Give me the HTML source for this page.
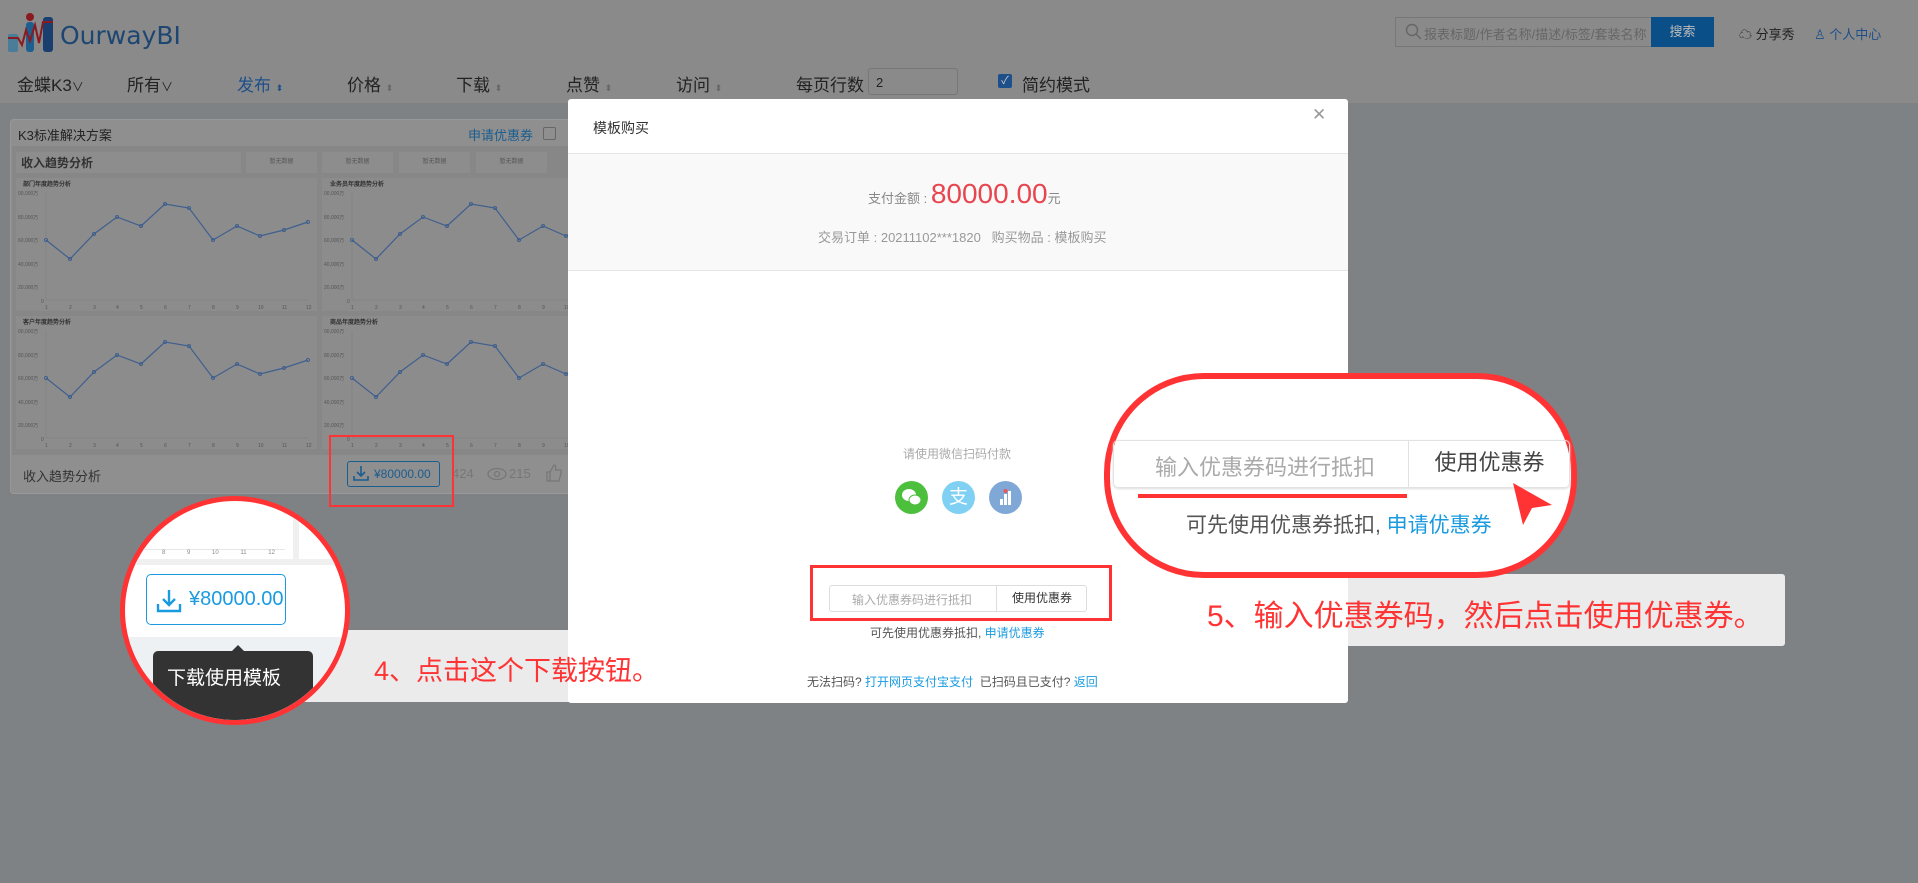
<!DOCTYPE html>
<html><head><meta charset="utf-8">
<style>
*{margin:0;padding:0;box-sizing:border-box}
body{width:1918px;height:883px;overflow:hidden;position:relative;background:#7f8285;font-family:"Liberation Sans","Noto Sans CJK SC",sans-serif}
.a{position:absolute;white-space:nowrap}
.nav{font-size:17px;color:#222;top:71px}
</style></head><body>
<div class="a" style="left:0;top:0;width:1918px;height:103px;background:#8a8a8a"></div>
<svg class="a" style="left:0;top:0" width="60" height="56">
<rect x="8" y="34" width="10" height="18" rx="2" fill="#4a7d98"/>
<rect x="26" y="22" width="8" height="30" rx="3" fill="#1d5f8f"/>
<rect x="43" y="17" width="10" height="35" rx="3" fill="#1a3f6e"/>
<circle cx="30" cy="17" r="4" fill="#8a1a22"/>
<polyline points="8,38 18,38 22,45 26,30 30,41 35,25 39,43 43,22 53,22" fill="none" stroke="#8a1a22" stroke-width="2"/>
</svg>
<div class="a" style="left:60px;top:21px;font-size:25px;color:#1d4672;font-family:'DejaVu Sans',sans-serif">OurwayBI</div>
<div class="a nav" style="left:17px">金蝶K3<span style="font-size:12px">∨</span></div>
<div class="a nav" style="left:127px">所有<span style="font-size:12px">∨</span></div>
<div class="a nav" style="left:237px;color:#1d4f8a">发布 <span style="font-size:9px">⬍</span></div>
<div class="a nav" style="left:347px">价格 <span style="font-size:9px;color:#666">⬍</span></div>
<div class="a nav" style="left:456px">下载 <span style="font-size:9px;color:#666">⬍</span></div>
<div class="a nav" style="left:566px">点赞 <span style="font-size:9px;color:#666">⬍</span></div>
<div class="a nav" style="left:676px">访问 <span style="font-size:9px;color:#666">⬍</span></div>
<div class="a nav" style="left:796px">每页行数</div>
<div class="a" style="left:868px;top:68px;width:90px;height:27px;border:1px solid #777;border-radius:3px;font-size:13px;padding:6px 7px;color:#222">2</div>
<div class="a" style="left:998px;top:74px;width:14px;height:14px;background:#1d4f8a;border-radius:2px;color:#ccc;font-size:11px;text-align:center;line-height:14px">✓</div>
<div class="a nav" style="left:1022px">简约模式</div>
<div class="a" style="left:1395px;top:17px;width:257px;height:30px;border:1px solid #777;font-size:13px;color:#666;padding:6px 0 0 28px">报表标题/作者名称/描述/标签/套装名称</div>
<svg class="a" style="left:1405px;top:23px" width="18" height="18"><circle cx="7" cy="7" r="5.5" fill="none" stroke="#666" stroke-width="1.4"/><line x1="11" y1="11" x2="16" y2="16" stroke="#666" stroke-width="1.4"/></svg>
<div class="a" style="left:1651px;top:17px;width:63px;height:30px;background:#0b4f88;color:#bbb;font-size:13px;text-align:center;line-height:30px">搜索</div>
<div class="a" style="left:1739px;top:24px;font-size:13px;color:#222">☁ 分享秀</div>
<div class="a" style="left:1814px;top:24px;font-size:13px;color:#1d4f8a">♙ 个人中心</div>

<div class="a" style="left:10px;top:119px;width:600px;height:375px;background:#8f8f8f;border:1px solid #999;border-radius:4px"></div>
<div class="a" style="left:18px;top:125px;font-size:13px;color:#222">K3标准解决方案</div>
<div class="a" style="left:468px;top:125px;font-size:13px;color:#1a5d8f">申请优惠券</div>
<div class="a" style="left:543px;top:127px;width:13px;height:13px;border:1px solid #666;border-radius:2px"></div>
<div class="a" style="left:12px;top:146px;width:560px;height:309px;background:#878787"></div>
<div class="a" style="left:16px;top:152px;width:225px;height:21px;background:#8d8d8d;font-size:12px;font-weight:bold;color:#333;padding:2px 5px">收入趋势分析</div>
<div class="a" style="left:246px;top:152px;width:71px;height:21px;background:#8d8d8d;font-size:6px;color:#555;text-align:center;line-height:21px">暂无数据</div>
<div class="a" style="left:322px;top:152px;width:71px;height:21px;background:#8d8d8d;font-size:6px;color:#555;text-align:center;line-height:21px">暂无数据</div>
<div class="a" style="left:399px;top:152px;width:71px;height:21px;background:#8d8d8d;font-size:6px;color:#555;text-align:center;line-height:21px">暂无数据</div>
<div class="a" style="left:476px;top:152px;width:71px;height:21px;background:#8d8d8d;font-size:6px;color:#555;text-align:center;line-height:21px">暂无数据</div>
<svg class="a" style="left:0;top:0" width="580" height="460" font-family="Liberation Sans" font-size="5" fill="#555">
<defs><g id="ch">
<rect width="301" height="133" fill="#8c8c8c"/>
<g fill="#555"><text x="2" y="17">00,000万</text><text x="2" y="41">80,000万</text><text x="2" y="64">60,000万</text><text x="2" y="88">40,000万</text><text x="2" y="111">20,000万</text><text x="25" y="125">0</text></g>
<line x1="30" y1="15" x2="30" y2="122" stroke="#7e7e7e" stroke-width=".6"/>
<line x1="30" y1="122" x2="292" y2="122" stroke="#7e7e7e" stroke-width=".6"/>
<polyline fill="none" stroke="#3f5f8f" stroke-width="1.2" points="30,62 54,81 78,56 101,39 125,48 149,26 173,30 197,62 221,48 244,58 268,52 292,44"/>
<g fill="none" stroke="#3f5f8f" stroke-width=".9"><circle cx="30" cy="62" r="1.6"/><circle cx="54" cy="81" r="1.6"/><circle cx="78" cy="56" r="1.6"/><circle cx="101" cy="39" r="1.6"/><circle cx="125" cy="48" r="1.6"/><circle cx="149" cy="26" r="1.6"/><circle cx="173" cy="30" r="1.6"/><circle cx="197" cy="62" r="1.6"/><circle cx="221" cy="48" r="1.6"/><circle cx="244" cy="58" r="1.6"/><circle cx="268" cy="52" r="1.6"/><circle cx="292" cy="44" r="1.6"/></g>
<g><text x="29" y="131">1</text><text x="53" y="131">2</text><text x="77" y="131">3</text><text x="100" y="131">4</text><text x="124" y="131">5</text><text x="148" y="131">6</text><text x="172" y="131">7</text><text x="196" y="131">8</text><text x="220" y="131">9</text><text x="242" y="131">10</text><text x="266" y="131">11</text><text x="290" y="131">12</text></g>
</g></defs>
<use href="#ch" x="16" y="178"/><use href="#ch" x="322" y="178"/><use href="#ch" x="16" y="316"/><use href="#ch" x="322" y="316"/>
<g font-size="6" font-weight="bold" fill="#333"><text x="23" y="186">部门年度趋势分析</text><text x="330" y="186">业务员年度趋势分析</text><text x="23" y="324">客户年度趋势分析</text><text x="330" y="324">商品年度趋势分析</text></g>
</svg>
<div class="a" style="left:23px;top:466px;font-size:13px;color:#333">收入趋势分析</div>
<div class="a" style="left:347px;top:461px;width:93px;height:26px;border:1px solid #1a5d8f;border-radius:3px;font-size:12px;color:#1a5d8f;padding:5px 0 0 26px">¥80000.00</div>
<svg class="a" style="left:353px;top:465px" width="16" height="16"><path d="M8 1v10M4 7l4 4 4-4M1 11v4h14v-4" fill="none" stroke="#1a5d8f" stroke-width="1.6"/></svg>
<div class="a" style="left:452px;top:466px;font-size:13px;color:#777">424</div>
<svg class="a" style="left:487px;top:467px" width="20" height="14"><ellipse cx="10" cy="7" rx="9" ry="5.5" fill="none" stroke="#777" stroke-width="1.3"/><circle cx="10" cy="7" r="2.5" fill="none" stroke="#777" stroke-width="1.3"/></svg>
<div class="a" style="left:509px;top:466px;font-size:13px;color:#777">215</div>
<svg class="a" style="left:546px;top:464px" width="16" height="18"><path d="M1 8h3v9H1zM4 8l4-7c2 0 2 2 1.5 5H15v3l-2 8H4" fill="none" stroke="#777" stroke-width="1.3"/></svg>
<div class="a" style="left:329px;top:435px;width:125px;height:72px;border:2px solid #f33"></div>

<div class="a" style="left:294px;top:630px;width:280px;height:72px;background:#ebebeb"></div>
<div class="a" style="left:1340px;top:574px;width:445px;height:72px;background:#ebebeb;border-radius:3px"></div>

<div class="a" style="left:568px;top:99px;width:780px;height:604px;background:#fff;border-radius:3px"></div>
<div class="a" style="left:593px;top:118px;font-size:14px;color:#333">模板购买</div>
<div class="a" style="left:1312px;top:105px;font-size:17px;color:#999">✕</div>
<div class="a" style="left:568px;top:153px;width:780px;height:118px;background:#f9f9f9;border-top:1px solid #e6e6e6;border-bottom:1px solid #e6e6e6"></div>
<div class="a" style="left:0;width:1918px;top:178px;text-align:left;padding-left:868px;font-size:13px;color:#888">支付金额 : <span style="font-size:28px;color:#e8464f">80000.00</span>元</div>
<div class="a" style="left:818px;top:227px;font-size:13px;color:#999">交易订单 : 20211102***1820 &nbsp;&nbsp;购买物品 : 模板购买</div>
<div class="a" style="left:903px;top:445px;font-size:12px;color:#aaa">请使用微信扫码付款</div>
<div class="a" style="left:895px;top:481px;width:33px;height:33px;border-radius:50%;background:#4cbf3c"></div>
<svg class="a" style="left:895px;top:481px" width="33" height="33"><ellipse cx="14" cy="14" rx="7" ry="6" fill="#fff"/><ellipse cx="20" cy="19" rx="6" ry="5" fill="#fff" stroke="#4cbf3c"/></svg>
<div class="a" style="left:942px;top:481px;width:33px;height:33px;border-radius:50%;background:#7fd0f3;color:#fff;font-size:19px;text-align:center;line-height:33px">支</div>
<div class="a" style="left:989px;top:481px;width:33px;height:33px;border-radius:50%;background:#7fa8d6"></div>
<svg class="a" style="left:989px;top:481px" width="33" height="33"><rect x="11" y="18" width="3" height="6" fill="#fff"/><rect x="15" y="13" width="3" height="11" fill="#fff"/><rect x="19" y="10" width="3" height="14" fill="#fff"/><circle cx="16.5" cy="10" r="2" fill="#e55"/></svg>
<div class="a" style="left:810px;top:565px;width:302px;height:56px;border:3px solid #f33"></div>
<div class="a" style="left:829px;top:585px;width:258px;height:27px;border:1px solid #ddd;border-radius:3px;font-size:12px;color:#aaa;padding:5px 0 0 22px">输入优惠券码进行抵扣</div>
<div class="a" style="left:996px;top:585px;width:91px;height:27px;border-left:1px solid #ddd;font-size:12px;color:#333;text-align:center;line-height:27px">使用优惠券</div>
<div class="a" style="left:870px;top:624px;font-size:12px;color:#555">可先使用优惠券抵扣, <span style="color:#1a9be0">申请优惠券</span></div>
<div class="a" style="left:807px;top:673px;font-size:12px;color:#555">无法扫码? <span style="color:#1a9be0">打开网页支付宝支付</span> &nbsp;已扫码且已支付? <span style="color:#1a9be0">返回</span></div>

<div class="a" style="left:1104px;top:373px;width:473px;height:205px;border:6px solid #f33;border-radius:100px;background:#fff"></div>
<div class="a" style="left:1113px;top:440px;width:457px;height:48px;border:1px solid #e2e2e2;border-radius:5px;box-shadow:0 1px 2px #ddd"></div>
<div class="a" style="left:1155px;top:450px;font-size:22px;color:#aaa">输入优惠券码进行抵扣</div>
<div class="a" style="left:1408px;top:440px;width:162px;height:48px;border-left:1px solid #e2e2e2;font-size:22px;color:#444;text-align:center;line-height:46px">使用优惠券</div>
<div class="a" style="left:1138px;top:494px;width:269px;height:4px;background:#f33"></div>
<div class="a" style="left:1186px;top:509px;font-size:21px;color:#555">可先使用优惠券抵扣, <span style="color:#1a9be0">申请优惠券</span></div>
<svg class="a" style="left:1500px;top:475px" width="60" height="60"><polygon points="13,8 52,30 32,33 23,50" fill="#f33"/></svg>
<div class="a" style="left:1207px;top:591px;font-size:30px;color:#f33">5、输入优惠券码，然后点击使用优惠券。</div>

<div class="a" style="left:120px;top:496px;width:230px;height:229px;border:5px solid #f33;border-radius:50%;background:#fff;overflow:hidden">
 <div class="a" style="left:-5px;top:58px;width:240px;height:6px;background:#f0f0f0"></div>
 <div class="a" style="left:0;top:48px;width:160px;height:1px;background:#e6e6e6"></div>
 <div class="a" style="left:168px;top:0;width:6px;height:62px;background:#f0f0f0"></div>
 <div class="a" style="left:37px;top:49px;font-size:6px;color:#888;word-spacing:20px">8 9 10 11 12</div>
 <div class="a" style="left:-5px;top:136px;width:240px;height:100px;background:#eef1f4"></div>
 <div class="a" style="left:21px;top:73px;width:140px;height:51px;border:1px solid #1a9be0;border-radius:5px;font-size:20px;color:#1a9be0;padding:13px 0 0 42px">¥80000.00</div>
 <svg class="a" style="left:31px;top:87px" width="26" height="26"><path d="M13 2v15M7 11l6 6 6-6M2 16v7h22v-7" fill="none" stroke="#1a9be0" stroke-width="2.4"/></svg>
 <div class="a" style="left:225px;top:84px;font-size:24px;color:#ccc">4</div>
 <div class="a" style="left:107px;top:138px;width:0;height:0;border:6px solid transparent;border-bottom-color:#333"></div>
 <div class="a" style="left:28px;top:150px;width:160px;height:70px;background:#333;border-radius:5px;color:#fff;font-size:19px;padding:12px 0 0 14px">下载使用模板</div>
</div>
<div class="a" style="left:374px;top:649px;font-size:27px;color:#f33">4、点击这个下载按钮。</div>
</body></html>
